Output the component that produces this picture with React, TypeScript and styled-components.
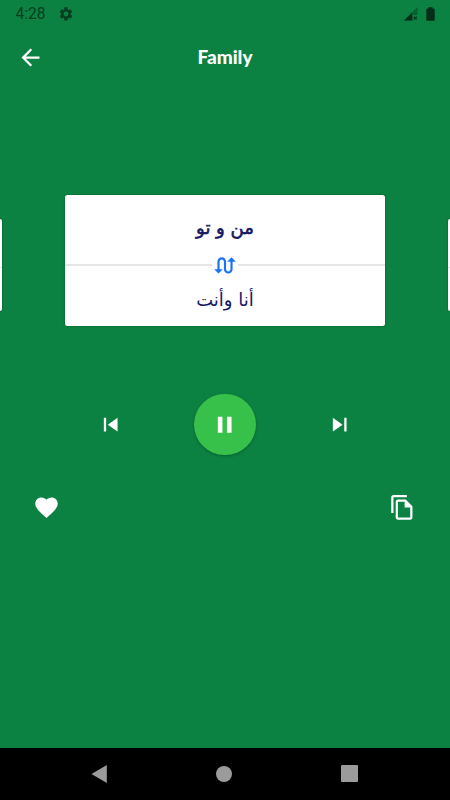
import React from "react";
import styled, { createGlobalStyle } from "styled-components";

const GlobalStyle = createGlobalStyle`
  * { box-sizing: border-box; }
  body { margin: 0; background: #0c8242; }
  button { border: 0; padding: 0; background: none; color: inherit; display: grid; place-items: center; }
  svg { display: block; }
`;

const Screen = styled.main`
  width: 450px;
  height: 800px;
  display: flex;
  flex-direction: column;
  overflow: hidden;
  background: #0c8242;
  color: #fff;
`;

const StatusBar = styled.div`
  height: 27px;
  display: flex;
  align-items: center;
  padding: 0 15.5px 0 15.5px;
  color: #073d21;
`;

const Clock = styled.span`
  font: 400 15.6px/28px Roboto, sans-serif;
  padding-top: 1px;
  width: 42px;
`;

const StatusIcons = styled.div`
  margin-left: auto;
  display: flex;
  align-items: center;
  gap: 7.5px;
`;

const AppBar = styled.header`
  height: 60px;
  display: grid;
  grid-template-columns: 61px 1fr 61px;
  align-items: center;
`;

const Title = styled.h1`
  margin: 0;
  text-align: center;
  font: 900 19px/30px Lato, sans-serif;
`;

const Carousel = styled.section`
  margin-top: 108px;
  height: 131px;
  display: flex;
  align-items: center;
  justify-content: space-between;
`;

const Card = styled.article`
  width: 319.4px;
  height: 131px;
  display: grid;
  grid-template-rows: 58px 24px 49px;
  border-radius: 2.5px;
  background: #fff;
  color: #171862;
  box-shadow: 0 0 2px rgba(0, 60, 10, 0.7);
`;

const Phrase = styled.p<{ $bold?: boolean }>`
  margin: 0;
  display: flex;
  justify-content: center;
  align-items: center;
  font-family: "DejaVu Sans", sans-serif;
  font-size: 18px;
  line-height: 24px;
  -webkit-text-stroke: ${(p) => (p.$bold ? "0.6px currentColor" : "0")};
  padding-top: ${(p) => (p.$bold ? "8px" : "0")};
  padding-bottom: ${(p) => (p.$bold ? "0" : "4px")};
`;

const Divider = styled.div`
  display: grid;
  grid-template-columns: 1fr 26px 1fr;
  align-items: center;
  justify-items: center;
  color: #1a73f5;
`;

const Rule = styled.span`
  width: 100%;
  height: 2px;
  margin-bottom: 2px;
  background: #e5e5e5;
`;

const SideCard = styled.div<{ $side: "left" | "right" }>`
  width: 2.4px;
  height: 92px;
  margin-top: 8px;
  padding-top: 48px;
  background: #fff;
  border-radius: ${(p) => (p.$side === "left" ? "0 2px 2px 0" : "2px 0 0 2px")};
  box-shadow: 0 0 2px rgba(0, 60, 10, 0.7);
`;

const SideRule = styled(Rule)`
  display: block;
  height: 1px;
`;

const Player = styled.section`
  margin-top: 67.4px;
  height: 62px;
  padding: 0 97px;
  display: flex;
  align-items: center;
  justify-content: space-between;
`;

const PauseButton = styled.button`
  && {
    width: 61.5px;
    height: 61.5px;
    border-radius: 50%;
    background: #37c14b;
    box-shadow: 0 1px 3px rgba(0, 55, 25, 0.45);
  }
`;

const Actions = styled.section`
  margin-top: 38px;
  height: 28px;
  padding: 0 34px 0 33px;
  display: flex;
  align-items: center;
  justify-content: space-between;
`;

const NavBar = styled.nav`
  margin-top: auto;
  height: 52.5px;
  padding: 0 92.5px 0 91px;
  display: flex;
  align-items: center;
  justify-content: space-between;
  background: #000;
  color: #9b9b9b;
`;

const paths = {
  back: "M20 11H7.83l5.59-5.59L12 4l-8 8 8 8 1.41-1.41L7.83 13H20v-2z",
  swap: "M18 4l-4 4h3v7c0 1.1-.9 2-2 2s-2-.9-2-2V8c0-2.21-1.79-4-4-4S5 5.79 5 8v7H2l4 4 4-4H7V8c0-1.1.9-2 2-2s2 .9 2 2v7c0 2.21 1.79 4 4 4s4-1.79 4-4V8h3l-4-4z",
  previous: "M6 6h2v12H6zm3.5 6l8.5 6V6z",
  next: "M6 18l8.5-6L6 6v12zM16 6v12h2V6h-2z",
  pause: "M6 19h4V5H6v14zm8-14v14h4V5h-4z",
  heart:
    "M12 21.35l-1.45-1.32C5.4 15.36 2 12.28 2 8.5 2 5.42 4.42 3 7.5 3c1.74 0 3.41.81 4.5 2.09C13.09 3.81 14.76 3 16.5 3 19.58 3 22 5.42 22 8.5c0 3.78-3.4 6.86-8.55 11.54L12 21.35z",
  copy: "M16 1H4c-1.1 0-2 .9-2 2v14h2V3h12V1zm-1 4H8c-1.1 0-1.99.9-1.99 2L6 21c0 1.1.89 2 1.99 2H19c1.1 0 2-.9 2-2V11l-6-6zM8 21V7h6v5h5v9H8z",
  gear: "M19.14 12.94c.04-.3.06-.61.06-.94s-.02-.64-.07-.94l2.03-1.58a.49.49 0 0 0 .12-.61l-1.92-3.32a.49.49 0 0 0-.59-.22l-2.39.96a7 7 0 0 0-1.62-.94l-.36-2.54A.48.48 0 0 0 13.92 2h-3.84a.48.48 0 0 0-.47.41l-.36 2.54a7.3 7.3 0 0 0-1.62.94l-2.39-.96a.48.48 0 0 0-.59.22L2.74 8.87a.47.47 0 0 0 .12.61l2.03 1.58a6.3 6.3 0 0 0-.02 1.88l-2.03 1.58a.49.49 0 0 0-.12.61l1.92 3.32c.12.22.37.29.59.22l2.39-.96c.5.38 1.03.7 1.62.94l.36 2.54c.05.24.24.41.48.41h3.84c.24 0 .44-.17.47-.41l.36-2.54a7.3 7.3 0 0 0 1.62-.94l2.39.96c.22.08.47 0 .59-.22l1.92-3.32a.47.47 0 0 0-.12-.61l-2.01-1.58zM12 15.6A3.6 3.6 0 1 1 12 8.4a3.6 3.6 0 0 1 0 7.2z",
};

const Glyph = ({ name, size = 27.4 }: { name: keyof typeof paths; size?: number }) => (
  <svg width={size} height={size} viewBox="0 0 24 24" fill="currentColor" aria-hidden="true">
    <path d={paths[name]} />
  </svg>
);

export default function App() {
  return (
    <>
      <GlobalStyle />
      <Screen>
        <StatusBar>
          <Clock>4:28</Clock>
          <Glyph name="gear" size={16} />
          <StatusIcons>
            <svg width="14" height="14" viewBox="0 0 14 14">
              <path d="M13.5 0v8H9v5.5H0z" fill="#07602f" />
              <path d="M8 5.5v8H0z" fill="#052d18" />
              <path d="M9.7 9.7l3 3m0-3l-3 3" stroke="#052d18" strokeWidth="1.2" />
            </svg>
            <svg width="9" height="14" viewBox="0 0 9 14" fill="#052d18">
              <path d="M2.5 1.5V0h4v1.5H8q.7 0 .7.7V13q0 .8-.7.8H1q-.7 0-.7-.8V2.2q0-.7.7-.7z" />
            </svg>
          </StatusIcons>
        </StatusBar>
        <AppBar>
          <button aria-label="Back">
            <Glyph name="back" size={27} />
          </button>
          <Title>Family</Title>
        </AppBar>
        <Carousel>
          <SideCard $side="left">
            <SideRule />
          </SideCard>
          <Card>
            <Phrase $bold dir="rtl" lang="fa">من و تو</Phrase>
            <Divider>
              <Rule />
              <Glyph name="swap" size={26} />
              <Rule />
            </Divider>
            <Phrase dir="rtl" lang="ar">أنا وأنت</Phrase>
          </Card>
          <SideCard $side="right">
            <SideRule />
          </SideCard>
        </Carousel>
        <Player>
          <button aria-label="Previous">
            <Glyph name="previous" />
          </button>
          <PauseButton aria-label="Pause">
            <Glyph name="pause" />
          </PauseButton>
          <button aria-label="Next">
            <Glyph name="next" />
          </button>
        </Player>
        <Actions>
          <button aria-label="Favorite">
            <Glyph name="heart" size={27} />
          </button>
          <button aria-label="Copy">
            <Glyph name="copy" size={26.8} />
          </button>
        </Actions>
        <NavBar>
          <svg width="16" height="18" viewBox="0 0 16 18" fill="currentColor">
            <path d="M15.8 0v18L.5 9z" />
          </svg>
          <svg width="17" height="16" viewBox="0 0 17 16" fill="currentColor">
            <circle cx="9" cy="8" r="8" />
          </svg>
          <svg width="17" height="17" viewBox="0 0 17 17" fill="currentColor">
            <rect width="17" height="17" rx="1" />
          </svg>
        </NavBar>
      </Screen>
    </>
  );
}
